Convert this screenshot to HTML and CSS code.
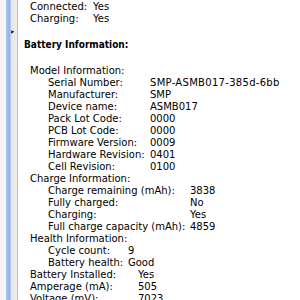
FILE: index.html
```html
<!DOCTYPE html>
<html lang="en">
<head>
  <meta charset="UTF-8" />
  <title>Battery Information</title>
  <link rel="stylesheet" href="styles.css">
</head>
<body>
  <div class="window">
    <div class="splitter">
      <span class="grip"></span>
    </div>

    <div class="content">
      <div class="table top">
        <span>Connected:</span><span>Yes</span>
        <span>Charging:</span><span>Yes</span>
      </div>

      <h2>Battery Information:</h2>

      <div class="section">Model Information:</div>
      <div class="table model">
        <span>Serial Number:</span><span class="serial">SMP-ASMB017-385d-6bb</span>
        <span>Manufacturer:</span><span>SMP</span>
        <span>Device name:</span><span>ASMB017</span>
        <span>Pack Lot Code:</span><span>0000</span>
        <span>PCB Lot Code:</span><span>0000</span>
        <span>Firmware Version:</span><span>0009</span>
        <span>Hardware Revision:</span><span>0401</span>
        <span>Cell Revision:</span><span>0100</span>
      </div>

      <div class="section">Charge Information:</div>
      <div class="table charge">
        <span>Charge remaining (mAh):</span><span>3838</span>
        <span>Fully charged:</span><span>No</span>
        <span>Charging:</span><span>Yes</span>
        <span>Full charge capacity (mAh):</span><span>4859</span>
      </div>

      <div class="section">Health Information:</div>
      <div class="table health">
        <span>Cycle count:</span><span>9</span>
        <span>Battery health:</span><span>Good</span>
      </div>

      <div class="table bottom">
        <span>Battery Installed:</span><span>Yes</span>
        <span>Amperage (mA):</span><span>505</span>
        <span>Voltage (mV):</span><span>7023</span>
      </div>
    </div>
  </div>
</body>
</html>
```

FILE: styles.css
```css
body {
  margin: 0;
  background: white;
  color: black;
  font-family: 'DejaVu Sans', sans-serif;
  font-size: 10px;
  line-height: 12px;
  overflow: hidden;
}
.window {
  display: flex;
  height: 300px;
}
.splitter {
  width: 11px;
  flex-shrink: 0;
  position: relative;
  border-left: 6px solid #f4f4f4;
  border-right: 1px solid #c2c2c2;
  background: linear-gradient(to right, #a9c6ee 0, #8db3e8 4px, #e6e6e6 5px, #ececec 100%);
}
.grip {
  position: absolute;
  left: 4px;
  top: 30px;
  width: 0;
  height: 0;
  border-left: 2px solid transparent;
  border-right: 2px solid transparent;
  border-bottom: 3px solid #222;
  transform: rotate(-30deg);
}
.content {
  padding: 1px 0 0 6px;
  white-space: nowrap;
}
h2 {
  font-family: 'DejaVu Sans Condensed', 'DejaVu Sans', sans-serif;
  font-size: 10px;
  font-weight: bold;
  margin: 14px 0 14px 0;
}
.section {
  padding-left: 6px;
}
.table {
  display: grid;
  padding-left: 24px;
}
.serial {
  letter-spacing: 0.3px;
}
.top {
  padding-left: 6px;
  grid-template-columns: 63px auto;
}
.model {
  grid-template-columns: 102px auto;
}
.charge {
  grid-template-columns: 142px auto;
}
.health {
  grid-template-columns: 80px auto;
}
.bottom {
  padding-left: 6px;
  grid-template-columns: 108px auto;
}
```
